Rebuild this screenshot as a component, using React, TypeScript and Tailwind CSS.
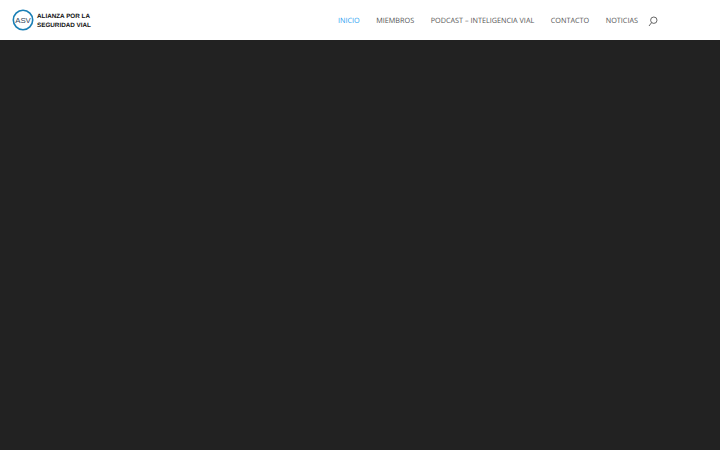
const navItems = ['MIEMBROS', 'PODCAST – INTELIGENCIA VIAL', 'CONTACTO', 'NOTICIAS'];

const Logo = () => (
  <div className="flex items-center gap-[3px]">
    <svg width="22" height="22" viewBox="0 0 22 22" className="shrink-0">
      <circle cx="11" cy="11" r="9.7" fill="none" stroke="#1a7fb5" strokeWidth="1.6" />
      <text x="11" y="13.8" textAnchor="middle" fontSize="7.8" fill="#33475b" fontFamily="'Liberation Sans', sans-serif">
        ASV
      </text>
    </svg>
    <div className="pt-[2px] font-['Liberation_Sans',sans-serif] text-[6.3px] leading-[9.5px] font-bold text-[#111] whitespace-nowrap [text-rendering:geometricPrecision]">
      <div>ALIANZA POR LA</div>
      <div>SEGURIDAD VIAL</div>
    </div>
  </div>
);

export default function App() {
  return (
    <div className="w-[720px] h-[450px] flex flex-col bg-[#222222] overflow-hidden font-['Open_Sans',sans-serif]">
      <header className="h-10 shrink-0 bg-white flex items-center pl-3 pr-[62px] shadow-[0_1px_0_rgba(0,0,0,0.1)]">
        <Logo />
        <nav className="ml-auto flex items-center gap-[16.5px] text-[7.25px] text-[#555555] whitespace-nowrap [text-rendering:geometricPrecision]">
          <a className="pt-[2px] text-[#2ea3f2]">INICIO</a>
          {navItems.map((item) => (
            <a key={item} className="pt-[2px]">{item}</a>
          ))}
          <svg width="10" height="11" viewBox="0 0 10 11" fill="none" stroke="#555" strokeWidth="0.9" className="ml-[-6.5px] mt-[2px]">
            <circle cx="5.8" cy="4.2" r="3.2" />
            <path d="M3.6 6.6 L1 10" />
          </svg>
        </nav>
      </header>
      <main className="flex-1 bg-[#222222]" />
    </div>
  );
}
